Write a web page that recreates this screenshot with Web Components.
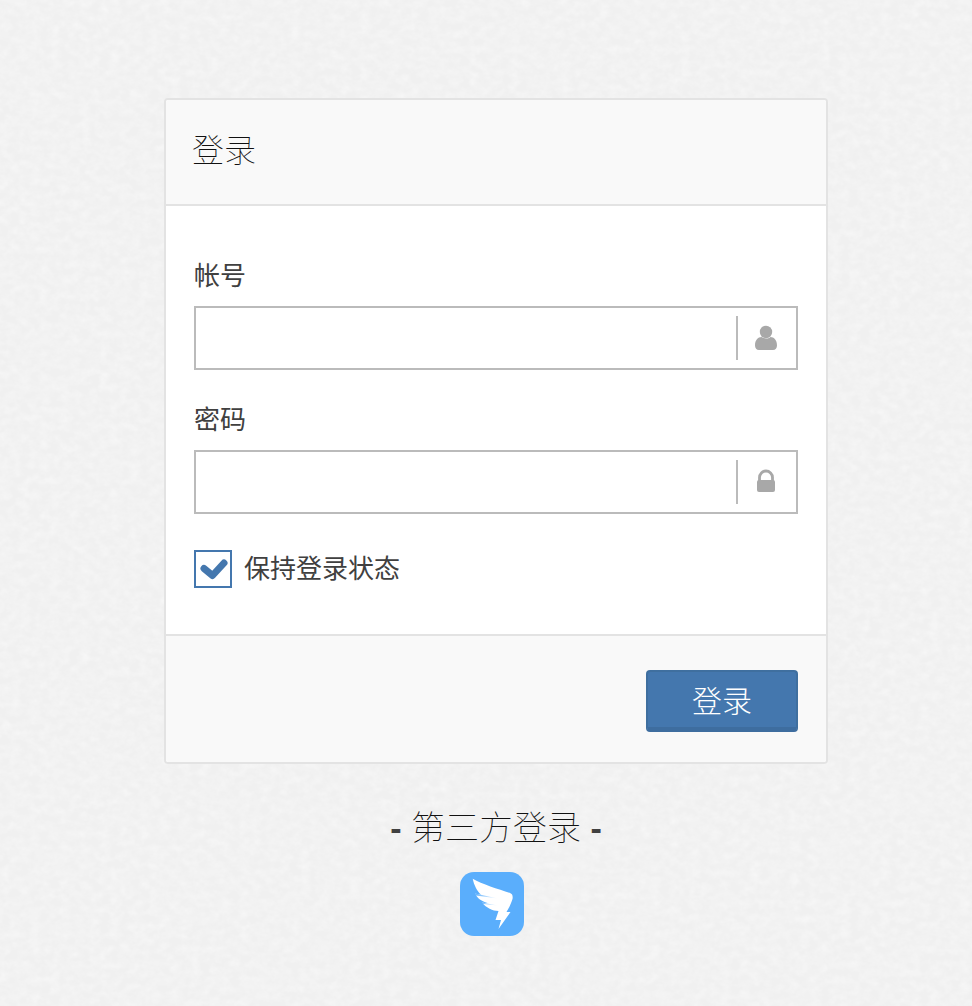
<!DOCTYPE html>
<html lang="zh">
<head>
<meta charset="utf-8">
<title>登录</title>
<style>
html{background:#f0f0f0;}
html,body{margin:0;padding:0;height:1006px;overflow:hidden;}
body{font-family:"Liberation Sans","Noto Sans CJK SC",sans-serif;color:#404040;}
</style>
</head>
<body>
<login-page>
  <login-card>
    <span slot="title">登录</span>
    <login-field label="帐号" icon="user"></login-field>
    <login-field label="密码" icon="lock"></login-field>
    <login-check>保持登录状态</login-check>
    <login-button slot="footer">登录</login-button>
  </login-card>
  <third-party><b>-</b> <span style="font-weight:100;color:#111">第三方登录</span> <b>-</b></third-party>
</login-page>

<script>
const pageTemp = document.createElement('template');
pageTemp.innerHTML = `
<style>
:host{display:block;position:relative;height:1006px;box-sizing:border-box;padding:98px 0 0 164px;}
.grain{position:absolute;left:0;top:0;width:972px;height:1006px;z-index:-1;}
</style>
<svg class="grain" width="972" height="1006">
  <filter id="paper" x="0" y="0" width="100%" height="100%">
    <feTurbulence type="fractalNoise" baseFrequency="0.1 0.13" numOctaves="3" seed="7"/>
    <feColorMatrix values="0 0 0 0 1  0 0 0 0 1  0 0 0 0 1  0.500 0.500 0 0 -0.380"/>
  </filter>
  <rect width="972" height="1006" filter="url(#paper)"/>
</svg>
<slot></slot>`;

class LoginPage extends HTMLElement {
  constructor(){
    super();
    this.attachShadow({mode:'open'}).appendChild(pageTemp.content.cloneNode(true));
  }
}
customElements.define('login-page', LoginPage);

const cardTemp = document.createElement('template');
cardTemp.innerHTML = `
<style>
:host{display:block;width:664px;box-sizing:border-box;border:2px solid #e3e3e3;border-radius:4px;background:#fff;}
.head{height:104px;padding:0 26px 2px;box-sizing:border-box;display:flex;align-items:center;background:#f9f9f9;border-radius:2px 2px 0 0;
  font-size:32px;font-weight:100;color:#111;line-height:1;}
.line{height:2px;background:#e3e3e3;}
.body{height:428px;box-sizing:border-box;padding:52px 28px 0;}
.foot{height:126px;box-sizing:border-box;padding:34px 28px 0;display:flex;justify-content:flex-end;align-items:flex-start;background:#f9f9f9;border-radius:0 0 2px 2px;}
</style>
<div class="head"><slot name="title"></slot></div>
<div class="line"></div>
<div class="body"><slot></slot></div>
<div class="line"></div>
<div class="foot"><slot name="footer"></slot></div>`;

class LoginCard extends HTMLElement {
  constructor(){
    super();
    this.attachShadow({mode:'open'}).appendChild(cardTemp.content.cloneNode(true));
  }
}
customElements.define('login-card', LoginCard);

const icons = {
  user: `<svg width="24" height="26" viewBox="0 0 24 26"><circle cx="12" cy="7" r="6.200" fill="#a8a8a8"/><path d="M1 20.500C1 15 4 12 7.500 12 8.800 13 10.300 13.500 12 13.500S15.200 13 16.500 12C20 12 23 15 23 20.500 23 23 21.500 25 19 25H5C2.500 25 1 23 1 20.500z" fill="#a8a8a8"/></svg>`,
  lock: `<svg width="24" height="26" viewBox="0 0 24 26"><path d="M5.500 12V8.500a6.500 6.500 0 0 1 13 0V12" fill="none" stroke="#a8a8a8" stroke-width="2.800"/><rect x="3" y="11" width="18" height="12" rx="2" fill="#a8a8a8"/></svg>`
};

const fieldTemp = document.createElement('template');
fieldTemp.innerHTML = `
<style>
:host{display:block;margin-bottom:32px;}
label{display:block;height:48px;font-size:26px;line-height:36px;color:#404040;}
.box{height:64px;box-sizing:border-box;border:2px solid #bbb;display:flex;align-items:center;background:#fff;}
input{flex:1;min-width:0;height:100%;border:0;outline:0;padding:0 12px;background:none;font:inherit;}
.icon{width:60px;height:44px;box-sizing:border-box;padding-right:2px;border-left:2px solid #bbb;display:flex;align-items:center;justify-content:center;}
.icon svg{display:block;}
</style>
<label></label>
<div class="box"><input type="text"><span class="icon"></span></div>`;

class LoginField extends HTMLElement {
  constructor(){
    super();
    this.attachShadow({mode:'open'}).appendChild(fieldTemp.content.cloneNode(true));
  }
  connectedCallback(){
    this.shadowRoot.querySelector('label').textContent = this.getAttribute('label');
    this.shadowRoot.querySelector('.icon').innerHTML = icons[this.getAttribute('icon')];
  }
}
customElements.define('login-field', LoginField);

const checkTemp = document.createElement('template');
checkTemp.innerHTML = `
<style>
:host{display:flex;align-items:flex-start;gap:12px;font-size:26px;line-height:38px;color:#404040;height:38px;margin-top:36px;}
.box{width:38px;height:38px;box-sizing:border-box;border:2px solid #4477ae;display:flex;align-items:center;justify-content:center;}
svg{display:block;}
</style>
<span class="box"><svg width="30" height="24" viewBox="0 0 30 24"><path d="M6 11.500l8.500 7L26 6" fill="none" stroke="#4477ae" stroke-width="7" stroke-linecap="round" stroke-linejoin="round"/></svg></span>
<slot></slot>`;

class LoginCheck extends HTMLElement {
  constructor(){
    super();
    this.attachShadow({mode:'open'}).appendChild(checkTemp.content.cloneNode(true));
  }
}
customElements.define('login-check', LoginCheck);

const btnTemp = document.createElement('template');
btnTemp.innerHTML = `
<style>
:host{display:block;width:152px;height:62px;box-sizing:border-box;background:#4477ae;border:2px solid #3f6f9f;border-bottom:5px solid #3e6d9f;border-radius:4px;
  color:#fff;font-size:30px;font-weight:200;line-height:60px;text-align:center;}
</style>
<slot></slot>`;

class LoginButton extends HTMLElement {
  constructor(){
    super();
    this.attachShadow({mode:'open'}).appendChild(btnTemp.content.cloneNode(true));
  }
}
customElements.define('login-button', LoginButton);

const thirdTemp = document.createElement('template');
thirdTemp.innerHTML = `
<style>
:host{display:block;width:664px;margin-top:38px;}
.text{height:52px;line-height:52px;text-align:center;font-size:34px;color:#404040;white-space:pre;}
.logo{display:block;margin:18px 0 0 296px;}
</style>
<div class="text"><slot></slot></div>
<svg class="logo" width="64" height="64" viewBox="0 0 64 64">
  <defs>
    <linearGradient id="slit" x1="0" y1="0" x2="1" y2="0">
      <stop offset="0" stop-color="#5aaefc"/>
      <stop offset="1" stop-color="#5aaefc" stop-opacity="0"/>
    </linearGradient>
  </defs>
  <rect width="64" height="64" rx="14" fill="#5aaefc"/>
  <path d="M12.700 6.700C22 12 38 17 50 21c2.500 1 3 3 2.500 6-1.500 5-4 10-6 13h4l-12 17 2.500-9h-5.500l3-9c-6 0-12-3-16.500-8.500 2 .4 4 .6 5.500.6C21 29 17 26 15 21.500c2 .6 4 1 6 1.100C17 19 14 13 12.700 6.700z" fill="#fff"/>
  <path d="M14 21.200L38 26.500 16 23.500z" fill="url(#slit)"/>
  <path d="M19 30L38 33.500 21 31.800z" fill="url(#slit)"/>
</svg>`;

class ThirdParty extends HTMLElement {
  constructor(){
    super();
    this.attachShadow({mode:'open'}).appendChild(thirdTemp.content.cloneNode(true));
  }
}
customElements.define('third-party', ThirdParty);
</script>
</body>
</html>
